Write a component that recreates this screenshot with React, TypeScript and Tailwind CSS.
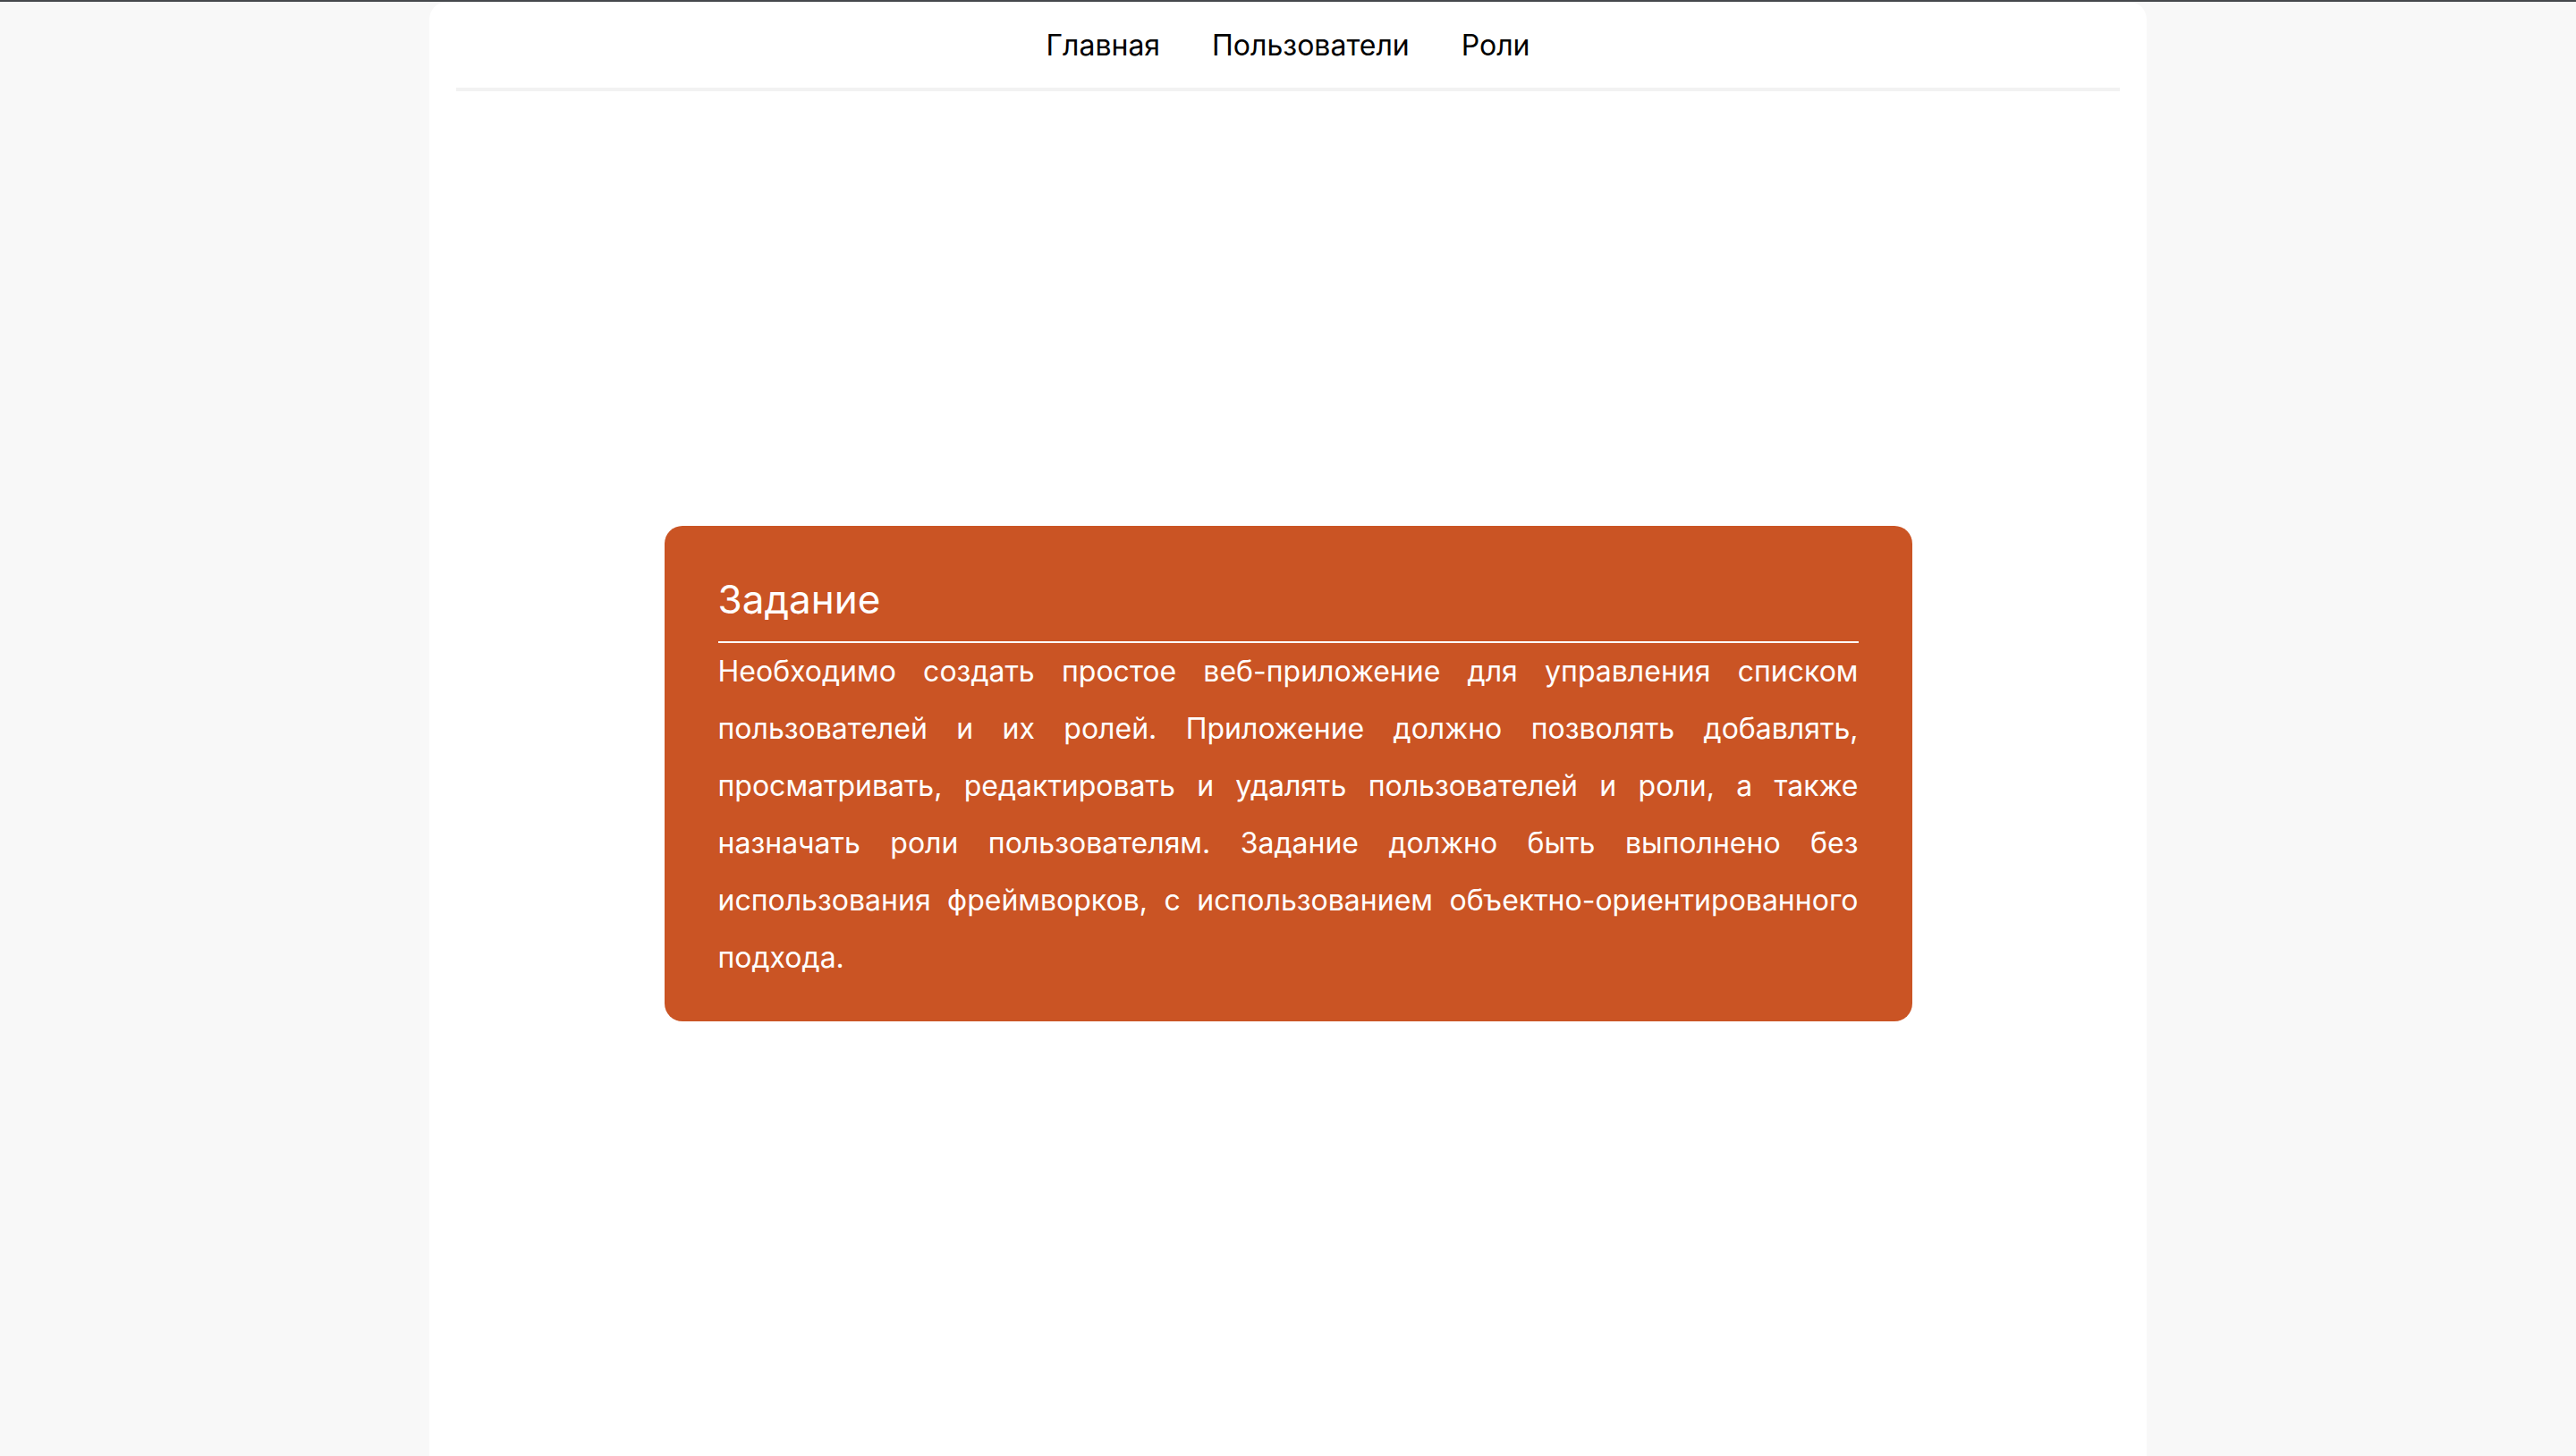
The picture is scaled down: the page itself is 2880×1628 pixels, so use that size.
const links = ['Главная', 'Пользователи', 'Роли']

export default function App() {
  return (
    <div className="min-h-screen flex flex-col bg-[#f8f8f8] font-['Inter',sans-serif]">
      <div className="h-[2px] bg-[#45484c]" />
      <div className="w-[1920px] mx-auto flex-1 flex flex-col bg-white rounded-t-[20px]">
        <nav className="mx-[30px] pt-[29px] pb-[28px] border-b-4 border-[#f2f2f2]">
          <ul className="flex justify-center gap-[58px] text-[32px] leading-[39px] text-black">
            {links.map((l) => (
              <li key={l}>
                <a href="#">{l}</a>
              </li>
            ))}
          </ul>
        </nav>
        <main className="flex-1 flex items-center justify-center">
          <section className="w-[1395px] bg-[#ca5424] rounded-[20px] px-[60px] pt-[56px] pb-[39px] text-white">
            <h2 className="text-[44px] leading-[53px]">Задание</h2>
            <hr className="mt-[20px] border-0 h-[2px] bg-white" />
            <p className="text-[32px] leading-[64px] text-justify">
              Необходимо создать простое веб-приложение для управления списком пользователей и их ролей.
              Приложение должно позволять добавлять, просматривать, редактировать и удалять пользователей и
              роли, а также назначать роли пользователям. Задание должно быть выполнено без использования
              фреймворков, с использованием объектно-ориентированного подхода.
            </p>
          </section>
        </main>
      </div>
    </div>
  )
}
